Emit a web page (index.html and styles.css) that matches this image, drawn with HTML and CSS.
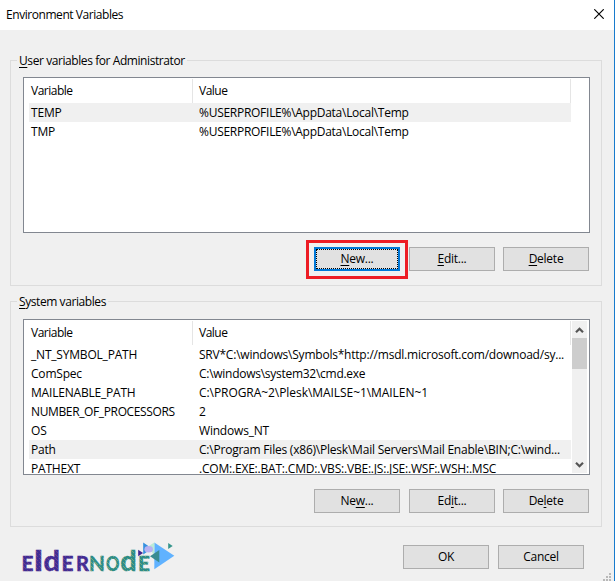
FILE: index.html
```html
<!DOCTYPE html>
<html lang="en">
<head>
<meta charset="utf-8">
<title>Environment Variables</title>
<link rel="stylesheet" href="styles.css">
</head>
<body>
<div class="dialog">
  <header class="titlebar">
    <span class="title">Environment Variables</span>
    <svg class="close" width="10" height="10" viewBox="0 0 10 10"><path d="M.3 .3 9.7 9.7M9.7 .3 .3 9.7" stroke="#000" stroke-width="1.15" fill="none"/></svg>
  </header>
  <main class="content">
    <section class="group">
      <h2 class="legend"><u>U</u>ser variables for Administrator</h2>
      <div class="list">
        <div class="table">
          <div class="row head"><span>Variable</span><span>Value</span></div>
          <div class="row selected"><span>TEMP</span><span class="profile">%USERPROFILE%\AppData\Local\Temp</span></div>
          <div class="row"><span>TMP</span><span class="profile">%USERPROFILE%\AppData\Local\Temp</span></div>
        </div>
      </div>
      <div class="actions">
        <button class="button focused"><span><u>N</u>ew...</span></button>
        <button class="button"><span><u>E</u>dit...</span></button>
        <button class="button"><span><u>D</u>elete</span></button>
      </div>
    </section>
    <section class="group system">
      <h2 class="legend"><u>S</u>ystem variables</h2>
      <div class="list">
        <div class="table">
          <div class="row head"><span>Variable</span><span>Value</span></div>
          <div class="row"><span>_NT_SYMBOL_PATH</span><span class="srv">SRV*C:\windows\Symbols*http://msdl.microsoft.com/downoad/sy...</span></div>
          <div class="row"><span>ComSpec</span><span class="cmd">C:\windows\system32\cmd.exe</span></div>
          <div class="row"><span>MAILENABLE_PATH</span><span class="progra">C:\PROGRA~2\Plesk\MAILSE~1\MAILEN~1</span></div>
          <div class="row"><span class="processors">NUMBER_OF_PROCESSORS</span><span>2</span></div>
          <div class="row"><span>OS</span><span>Windows_NT</span></div>
          <div class="row selected"><span>Path</span><span class="path">C:\Program Files (x86)\Plesk\Mail Servers\Mail Enable\BIN;C:\wind...</span></div>
          <div class="row"><span>PATHEXT</span><span>.COM:.EXE:.BAT:.CMD:.VBS:.VBE:.JS:.JSE:.WSF:.WSH:.MSC</span></div>
        </div>
        <div class="scrollbar">
          <svg width="15" height="17" viewBox="0 0 15 17"><path d="M4 11.3 7.5 7.8 11 11.3" fill="none" stroke="#555" stroke-width="2.2"/></svg>
          <div class="thumb"></div>
          <svg class="down" width="15" height="17" viewBox="0 0 15 17"><path d="M4 6.7 7.5 10.2 11 6.7" fill="none" stroke="#555" stroke-width="2.2"/></svg>
        </div>
      </div>
      <div class="actions">
        <button class="button"><span>Ne<u>w</u>...</span></button>
        <button class="button"><span>Ed<u>i</u>t...</span></button>
        <button class="button"><span>De<u>l</u>ete</span></button>
      </div>
    </section>
  </main>
  <footer class="footer">
    <svg class="logo" width="160" height="40" viewBox="18 538 160 40">
      <defs>
        <pattern id="purple" width="4" height="4" patternUnits="userSpaceOnUse"><path fill="#412c94" d="M0 0h4v4H0z"/><path fill="#68418c" d="M1 0h1v1H1zM3 2h1v1H3zM0 3h1v1H0z"/></pattern>
        <pattern id="teal" width="4" height="4" patternUnits="userSpaceOnUse"><path fill="#2d8c88" d="M0 0h4v4H0z"/><path fill="#75a878" d="M1 0h1v1H1zM3 2h1v1H3zM0 3h1v1H0z"/></pattern>
      </defs>
      <g class="logo-letters" fill="url(#purple)" stroke="url(#purple)">
        <text x="21.5" y="571" textLength="12" lengthAdjust="spacingAndGlyphs">E</text>
        <text class="tall" x="34" y="571" textLength="9" lengthAdjust="spacingAndGlyphs">l</text>
        <text class="tall" x="43.5" y="571" textLength="16.5" lengthAdjust="spacingAndGlyphs">d</text>
        <text x="61.5" y="571" textLength="12" lengthAdjust="spacingAndGlyphs">E</text>
        <text x="76" y="571" textLength="13" lengthAdjust="spacingAndGlyphs">R</text>
      </g>
      <g class="logo-letters" fill="url(#teal)" stroke="url(#teal)">
        <text x="89" y="571" textLength="16" lengthAdjust="spacingAndGlyphs">N</text>
        <text x="106" y="571" textLength="13.5" lengthAdjust="spacingAndGlyphs">O</text>
        <text class="tall" x="120.3" y="571" textLength="16.5" lengthAdjust="spacingAndGlyphs">d</text>
        <text x="138" y="571" textLength="12" lengthAdjust="spacingAndGlyphs">E</text>
      </g>
      <path d="M154.3 542.5 174.3 555.8 154.3 569.3z" fill="#60b2ff"/>
      <path d="M143.2 542.5 152 548.5 143.2 554.5z" fill="#3490df"/>
      <path d="M148 546.5 154.3 542.5v13z" fill="#bcebd5"/>
      <ellipse cx="148.7" cy="549.3" rx="4.3" ry="3.2" fill="#b8b1f1"/>
      <path d="M159.3 550v12.5l-9.3-6.3z" fill="#398c91"/>
      <path d="M138.2 549.8l4.9 3.2-4.9 3.2z" fill="#422590"/>
      <path d="M168.2 543l4.5 3-4.5 3z" fill="#36958c"/>
    </svg>
    <div class="confirm">
      <button class="button"><span>OK</span></button>
      <button class="button"><span>Cancel</span></button>
    </div>
  </footer>
  <svg class="grip" width="8" height="8" viewBox="0 0 8 8"><path d="M6 0h2v2H6zM3 3h2v2H3zM6 3h2v2H6zM0 6h2v2H0zM3 6h2v2H3zM6 6h2v2H6z" fill="#b8b8b8"/></svg>
  <div class="highlight"></div>
</div>
</body>
</html>
```
FILE: styles.css
```css
* { box-sizing: border-box; }
body { margin: 0; overflow: hidden; }
.dialog {
  position: relative;
  width: 615px;
  height: 581px;
  background: #f0f0f0;
  border-right: 1px solid #187bcd;
  color: #000;
  font: 12px/16px "Open Sans", "Noto Sans", sans-serif;
  letter-spacing: -0.2px;
}
.titlebar {
  height: 30px;
  padding: 0 10px 0 6px;
  background: #fff;
  display: flex;
  align-items: center;
  justify-content: space-between;
}
.title { letter-spacing: -0.44px; }
.close { margin-top: -2px; }
.content {
  padding: 30px 12px 0 10px;
  display: grid;
  gap: 15px;
}
.group {
  height: 226px;
  padding: 0 11px 0 12px;
  border: 1px solid #dcdcdc;
}
.legend {
  width: max-content;
  height: 16px;
  margin: -8px 0 0 -6px;
  padding: 0 2px;
  background: #f0f0f0;
  font-size: 12px;
  font-weight: 400;
  letter-spacing: -0.42px;
  white-space: nowrap;
}
u { text-decoration-thickness: 1px; text-underline-offset: 2px; }
.list {
  width: 567px;
  height: 156px;
  margin-top: 8px;
  padding: 1px 1px 0 5px;
  border: 1px solid #828790;
  background: #fff;
  display: flex;
  overflow: hidden;
}
.system .list { margin-top: 9px; }
.table { width: 542px; flex: none; }
.row {
  height: 19px;
  line-height: 19px;
  display: grid;
  grid-template-columns: 168px 374px;
  white-space: nowrap;
}
.row span { padding-left: 2px; }
.row.selected { background: #f0f0f0; }
.row.head { height: 24px; line-height: 24px; letter-spacing: -0.5px; }
.head span { border-right: 1px solid #e5e5e5; }
.head span:first-child { margin-right: 4px; }
.profile, .cmd { letter-spacing: -0.27px; }
.srv, .path { letter-spacing: -0.22px; }
.progra { letter-spacing: -0.06px; }
.processors { letter-spacing: -0.37px; }
.scrollbar {
  width: 15px;
  height: 152px;
  margin-left: 1px;
  background: #f0f0f0;
  display: flex;
  flex-direction: column;
}
.thumb { height: 31px; background: #cdcdcd; }
.down { margin-top: auto; }
.actions {
  margin-top: 14px;
  padding-right: 1px;
  display: flex;
  justify-content: flex-end;
  gap: 8px;
}
.actions .button:first-child { margin-right: 1px; }
.button {
  width: 86px;
  height: 24px;
  padding: 0;
  border: 1px solid #adadad;
  border-radius: 0;
  background: #e1e1e1;
  color: #000;
  font: inherit;
  letter-spacing: -0.25px;
}
.focused { border: 2px solid #0078d7; outline: 1px dotted #000; outline-offset: -3px; }
.footer {
  height: 54px;
  padding: 11px 30px 0 18px;
  display: flex;
  justify-content: space-between;
}
.confirm { padding-top: 7px; display: flex; gap: 9px; }
.logo-letters { font: 900 20px Lato, sans-serif; stroke-width: .3px; letter-spacing: 0; }
.tall { font-size: 29px; }
.grip { position: absolute; right: 3px; bottom: 0; }
.highlight {
  position: absolute;
  left: 306px;
  top: 240px;
  width: 102px;
  height: 39px;
  border: 3px solid #ed1c24;
}
```
